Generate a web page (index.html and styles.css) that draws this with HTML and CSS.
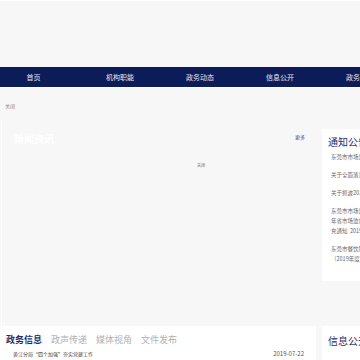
FILE: index.html
```html
<!DOCTYPE html>
<html lang="zh-CN">
<head>
    <meta charset="UTF-8">
    <title>东莞市市场监督管理局</title>
    <link rel="stylesheet" href="styles.css">
</head>
<body>
    <div class="banner"></div>

    <div class="nav">
        <ul>
            <li class="first">首页</li>
            <li>机构职能</li>
            <li>政务动态</li>
            <li>信息公开</li>
            <li>政务服务</li>
        </ul>
    </div>

    <div class="close-bar">关闭</div>

    <div class="main">
        <div class="col-left">
            <div class="news">
                <div class="news-head">
                    <h2>新闻资讯</h2>
                    <a href="#">更多</a>
                </div>
                <p class="news-close">关闭</p>
            </div>
            <div class="tabs">
                <ul class="tab-nav">
                    <li class="active">政务信息</li>
                    <li>政声传递</li>
                    <li>媒体视角</li>
                    <li>文件发布</li>
                </ul>
                <div class="tab-row">
                    <span>黄江分局“四个加强”夯实党建工作</span>
                    <span class="date">2019-07-22</span>
                </div>
            </div>
        </div>

        <div class="col-right">
            <div class="notice">
                <h3>通知公告</h3>
                <ul>
                    <li>东莞市市场监督管理局关于</li>
                    <li>关于全面落实食品安全主体</li>
                    <li>关于抓波2019年度</li>
                    <li>东莞市市场监督管理局关于<br>年省市场监督管理局的补<br>充通知&nbsp;&nbsp;2019</li>
                    <li>东莞市餐饮服务食品安全<br>（2019年度）</li>
                </ul>
            </div>
            <div class="info">
                <h3>信息公开</h3>
                <span class="tag">信息公开目录</span>
            </div>
        </div>
    </div>
</body>
</html>
```
FILE: styles.css
```css
* {
    margin: 0;
    padding: 0;
}

ul li {
    list-style: none;
}

a {
    text-decoration: none;
}

body {
    width: 360px;
    height: 360px;
    overflow: hidden;
    background-color: #f7f7f7;
    font-family: "Noto Sans CJK SC", "Liberation Sans", sans-serif;
    color: #666;
}

.banner {
    height: 67px;
    border-top: 1px solid #fff;
    box-sizing: border-box;
}

.nav {
    height: 20px;
    background-color: #0c1c58;
    border-bottom: 1px solid #fff;
}

.nav ul {
    display: flex;
    white-space: nowrap;
}

.nav li {
    flex: 0 0 80px;
    line-height: 20px;
    font-size: 7px;
    text-align: center;
    color: #e4e6f0;
}

.nav li.first {
    flex-basis: 67px;
    margin-right: 13px;
}

.close-bar {
    height: 33px;
    padding: 14px 0 0 5px;
    box-sizing: border-box;
    font-size: 5px;
    color: #888;
}

.main {
    display: flex;
    gap: 6px;
}

.col-left {
    flex: 0 0 316px;
}

.news {
    height: 205px;
    border-left: 1px solid #fff;
    margin-left: 1px;
}

.news-head {
    display: flex;
    justify-content: space-between;
    align-items: flex-start;
    padding: 12px 11px 0 12px;
}

.news-head h2 {
    font-size: 10px;
    color: #fff;
    line-height: 12px;
}

.news-head a {
    font-size: 5px;
    color: #3949a0;
    line-height: 8px;
}

.news-close {
    font-size: 4px;
    color: #666;
    margin: 17px 0 0 195px;
}

.tabs {
    background-color: #fff;
    height: 40px;
    padding: 7px 6px 0 6px;
}

.tab-nav {
    display: flex;
    gap: 9px;
}

.tab-nav li {
    font-size: 9px;
    line-height: 14px;
    color: #b0b0b0;
}

.tab-nav li.active {
    color: #1e2e6e;
    font-weight: bold;
}

.tab-row {
    display: flex;
    justify-content: space-between;
    padding: 2px 6px 0 7px;
    font-size: 5px;
    line-height: 9px;
    color: #444;
}

.tab-row .date {
    font-size: 6px;
    color: #555;
}

.col-right {
    flex: 0 0 100px;
    display: flex;
    flex-direction: column;
    gap: 45px;
    padding-top: 8px;
}

.notice,
.info {
    background-color: #fff;
    padding: 6px 0 0 6px;
}

.notice {
    height: 146px;
}

.col-right h3 {
    font-size: 10px;
    font-weight: normal;
    color: #1e2e6e;
    line-height: 14px;
    margin-bottom: 3px;
}

.notice li {
    font-size: 5.5px;
    line-height: 10px;
    color: #666;
    padding-left: 3px;
    margin-bottom: 8px;
}

.info {
    height: 40px;
    padding-top: 8px;
}

.tag {
    display: inline-block;
    margin-top: 2px;
    padding: 0 6px;
    background-color: #eef0f5;
    font-size: 5px;
    line-height: 8px;
    color: #888;
}
```
